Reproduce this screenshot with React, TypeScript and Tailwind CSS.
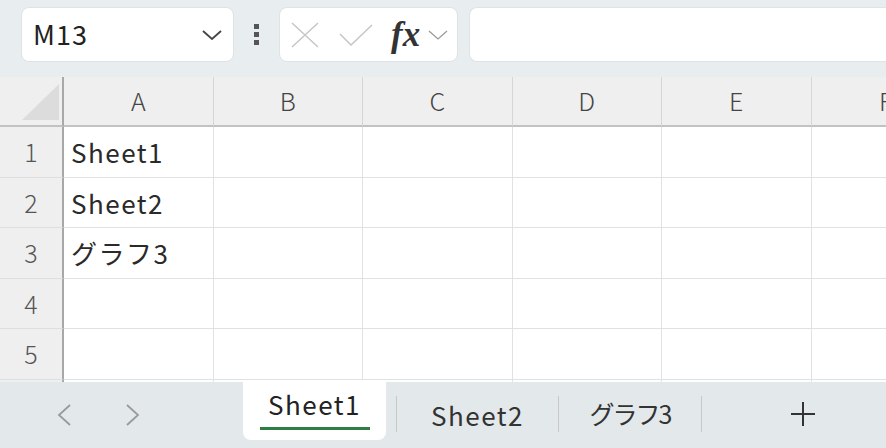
const cols = ["A", "B", "C", "D", "E", "F"];
const rows: { n: string; v: string }[] = [
  { n: "1", v: "Sheet1" },
  { n: "2", v: "Sheet2" },
  { n: "3", v: "グラフ3" },
  { n: "4", v: "" },
  { n: "5", v: "" },
  { n: "6", v: "" },
];

const font = "font-['Noto_Sans_CJK_JP','Noto_Sans',sans-serif]";

const Chevron = ({ w, h, color, sw = 1.6 }: { w: number; h: number; color: string; sw?: number }) => (
  <svg width={w} height={h} viewBox={`0 0 ${w} ${h}`} fill="none">
    <polyline points={`1,1 ${w / 2},${h - 1} ${w - 1},1`} stroke={color} strokeWidth={sw} />
  </svg>
);

export default function App() {
  return (
    <div className={`flex h-[448px] w-[886px] flex-col overflow-hidden bg-white ${font}`}>
      {/* Formula bar */}
      <div className="flex h-[77px] shrink-0 items-start bg-[#e8edf0] pt-[7px] pl-[21px]">
        <div className="flex h-[55px] w-[213px] shrink-0 items-center justify-between rounded-lg border border-[#dfe3e6] bg-white pr-[11px] pl-[11px]">
          <span className="text-[27px] tracking-[1px] text-[#222]">M13</span>
          <Chevron w={20} h={10} color="#444" sw={1.8} />
        </div>
        <div className="flex h-[55px] w-[45px] shrink-0 flex-col items-center justify-center gap-[3px]">
          <span className="size-[5px] bg-[#555]" />
          <span className="size-[5px] bg-[#555]" />
          <span className="size-[5px] bg-[#555]" />
        </div>
        <div className="flex h-[55px] w-[179px] shrink-0 items-center rounded-lg border border-[#dfe3e6] bg-white pl-[11px]">
          <svg width="28" height="26" viewBox="0 0 28 26" fill="none">
            <path d="M1 1 27 25M27 1 1 25" stroke="#c6c6c6" strokeWidth="1.5" />
          </svg>
          <svg className="ml-[20px]" width="34" height="22" viewBox="0 0 34 22" fill="none">
            <polyline points="1,10 12,21 33,1" stroke="#c6c6c6" strokeWidth="1.5" />
          </svg>
          <span className="ml-[18px] font-['Liberation_Serif',serif] text-[35px] font-bold italic leading-none text-[#333]">
            fx
          </span>
          <span className="ml-[8px]">
            <Chevron w={20} h={10} color="#9a9a9a" sw={1.3} />
          </span>
        </div>
        <div className="ml-[11px] h-[55px] flex-1 rounded-l-lg border border-r-0 border-[#dfe3e6] bg-white" />
      </div>

      {/* Grid */}
      <div className="h-[305px] shrink-0 overflow-hidden">
        <div className="flex h-[50px] bg-[#efefef]">
          <div className="relative w-[64px] shrink-0 border-r-2 border-b-2 border-r-[#a8a8a8] border-b-[#c2c2c2]">
            <div className="absolute top-[7px] left-[22px] h-[36px] w-[37px] bg-[#dcdcdc] [clip-path:polygon(100%_0,100%_100%,0_100%)]" />
          </div>
          {cols.map((c) => (
            <div
              key={c}
              className="flex w-[149.5px] shrink-0 items-center justify-center border-r border-b-2 border-r-[#d6d6d6] border-b-[#c2c2c2] text-[25px] font-light text-[#444]"
            >
              {c}
            </div>
          ))}
        </div>
        {rows.map((r) => (
          <div key={r.n} className="flex h-[50.5px]">
            <div className="flex w-[64px] shrink-0 items-center justify-center border-r-2 border-b border-r-[#a8a8a8] border-b-[#dedede] bg-[#efefef] text-[25px] font-light text-[#555]">
              {r.n}
            </div>
            {cols.map((c, i) => (
              <div
                key={c}
                className="flex w-[149.5px] shrink-0 items-center border-r border-b border-[#e1e1e1] pl-[7px] text-[26px] tracking-[1.5px] text-[#2a2a2a]"
              >
                {i === 0 ? r.v : ""}
              </div>
            ))}
          </div>
        ))}
      </div>

      {/* Sheet tabs */}
      <div className="flex flex-1 items-start bg-[#e3e8eb]">
        <div className="flex h-[66px] w-[243px] shrink-0 items-center gap-[55px] pl-[57px]">
          <svg width="14" height="22" viewBox="0 0 14 22" fill="none">
            <polyline points="13,1 2,11 13,21" stroke="#9a9a9a" strokeWidth="1.8" />
          </svg>
          <svg width="14" height="22" viewBox="0 0 14 22" fill="none">
            <polyline points="1,1 12,11 1,21" stroke="#9a9a9a" strokeWidth="1.8" />
          </svg>
        </div>
        <div className="-mt-[2px] flex h-[60px] w-[143px] shrink-0 flex-col items-center justify-center rounded-b-lg bg-white">
          <span className="text-[26px] leading-none tracking-[1.5px] text-[#222]">Sheet1</span>
          <span className="mt-[10px] h-[3px] w-[110px] bg-[#2e7d45]" />
        </div>
        <div className="mt-[14px] ml-[10px] h-[36px] w-px shrink-0 bg-[#c8c8c8]" />
        <div className="flex h-[64px] w-[161px] shrink-0 items-center justify-center text-[26px] tracking-[1.5px] text-[#333]">
          Sheet2
        </div>
        <div className="mt-[14px] h-[36px] w-px shrink-0 bg-[#c8c8c8]" />
        <div className="flex h-[64px] w-[142px] shrink-0 items-center justify-center text-[25px] tracking-[-2px] text-[#333]">
          グラフ3
        </div>
        <div className="mt-[14px] h-[36px] w-px shrink-0 bg-[#c8c8c8]" />
        <div className="flex h-[64px] flex-1 items-center pl-[89px]">
          <svg width="24" height="24" viewBox="0 0 24 24" fill="none">
            <path d="M12 0v24M0 12h24" stroke="#333" strokeWidth="2" />
          </svg>
        </div>
      </div>
    </div>
  );
}
